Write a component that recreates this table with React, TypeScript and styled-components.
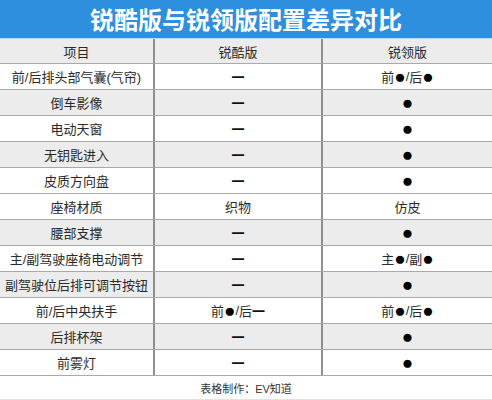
import styled, { createGlobalStyle } from "styled-components";

type Row = { item: string; a: string; b: string; shaded?: boolean };

const rows: Row[] = [
  { item: "前/后排头部气囊(气帘)", a: "一", b: "前●/后●" },
  { item: "倒车影像", a: "一", b: "●", shaded: true },
  { item: "电动天窗", a: "一", b: "●" },
  { item: "无钥匙进入", a: "一", b: "●", shaded: true },
  { item: "皮质方向盘", a: "一", b: "●" },
  { item: "座椅材质", a: "织物", b: "仿皮" },
  { item: "腰部支撑", a: "一", b: "●", shaded: true },
  { item: "主/副驾驶座椅电动调节", a: "一", b: "主●/副●" },
  { item: "副驾驶位后排可调节按钮", a: "一", b: "●", shaded: true },
  { item: "前/后中央扶手", a: "前●/后一", b: "前●/后●" },
  { item: "后排杯架", a: "一", b: "●", shaded: true },
  { item: "前雾灯", a: "一", b: "●" },
];

function Value({ text }: { text: string }) {
  return (
    <>
      {Array.from(text).map((ch, i) =>
        ch === "一" ? <Dash key={i}>一</Dash> : ch === "●" ? <Dot key={i}>●</Dot> : <span key={i}>{ch}</span>
      )}
    </>
  );
}

export default function App() {
  return (
    <>
      <Global />
      <Page>
        <Title>锐酷版与锐领版配置差异对比</Title>
        <Table>
          <TableRow $shaded>
            <Cell>项目</Cell>
            <Cell>锐酷版</Cell>
            <Cell>锐领版</Cell>
          </TableRow>
          {rows.map((r) => (
            <TableRow key={r.item} $shaded={r.shaded}>
              <Cell>{r.item}</Cell>
              <Cell>
                <Value text={r.a} />
              </Cell>
              <Cell>
                <Value text={r.b} />
              </Cell>
            </TableRow>
          ))}
        </Table>
        <Footer>表格制作：EV知道</Footer>
      </Page>
    </>
  );
}

const Global = createGlobalStyle`
  html, body {
    margin: 0;
    padding: 0;
    background: #fff;
  }
  body {
    font-family: "Liberation Sans", "Noto Sans CJK SC", sans-serif;
  }
`;

const Page = styled.div`
  width: 492px;
  height: 400px;
  display: flex;
  flex-direction: column;
  overflow: hidden;
`;

const Title = styled.div`
  height: 38px;
  background: #2d8fdd;
  border-bottom: 1px solid #b7d9f3;
  color: #fff;
  font-family: "Noto Sans CJK SC", sans-serif;
  font-size: 24px;
  font-weight: 700;
  display: flex;
  align-items: center;
  justify-content: center;
  line-height: 1;
`;

const Table = styled.div`
  display: flex;
  flex-direction: column;
`;

const TableRow = styled.div<{ $shaded?: boolean }>`
  display: grid;
  grid-template-columns: 155px 168px 1fr;
  height: 26px;
  box-sizing: border-box;
  border-bottom: 1px solid #a9a9a9;
  background: ${({ $shaded }) => ($shaded ? "#ececec" : "#fff")};

  &:first-child {
    height: 25px;
  }
`;

const Cell = styled.div`
  display: flex;
  align-items: center;
  justify-content: center;
  font-size: 13px;
  color: #2a2a2a;
  white-space: nowrap;
  border-right: 2px solid #8f8f8f;

  &:last-child {
    border-right: 0;
  }
`;

const Dash = styled.span`
  font-weight: 700;
  color: #111;
`;

const Dot = styled.span`
  font-family: "Liberation Sans", sans-serif;
  font-size: 19px;
  line-height: 1;
  color: #000;
`;

const Footer = styled.div`
  height: 23px;
  display: flex;
  align-items: center;
  justify-content: center;
  font-size: 11px;
  color: #333;
  border-bottom: 1px solid #e2e2e2;
`;
